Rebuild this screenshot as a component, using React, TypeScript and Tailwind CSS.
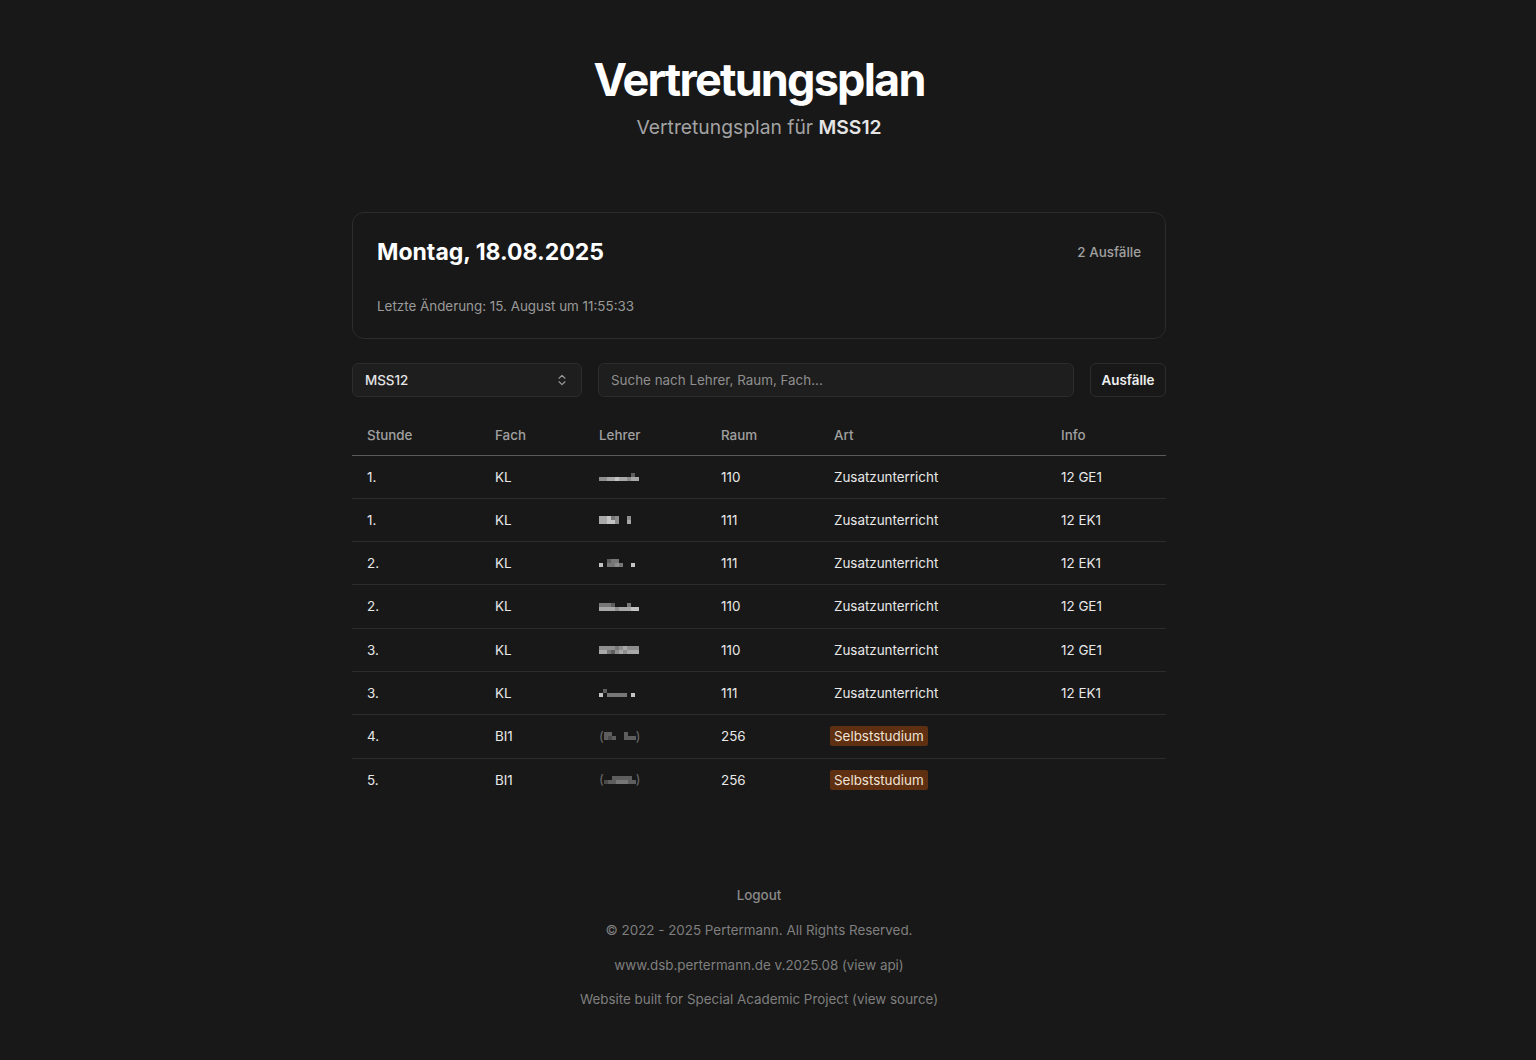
import React from "react";
import { ChevronsUpDown } from "lucide-react";

type Row = {
  stunde: string;
  fach: string;
  lehrer: number[][];
  paren?: boolean;
  raum: string;
  art: string;
  info: string;
  highlight?: boolean;
};

// pixelated names: each row of shades, values 0 = empty
const rows: Row[] = [
  { stunde: "1.", fach: "KL", lehrer: [[0, 0, 0, 0, 0, 0, 0, 0, 3, 0], [5, 5, 6, 6, 7, 6, 6, 5, 6, 6]], raum: "110", art: "Zusatzunterricht", info: "12 GE1" },
  { stunde: "1.", fach: "KL", lehrer: [[6, 6, 7, 4, 5, 0, 0, 5, 0, 0], [6, 6, 7, 7, 5, 0, 0, 6, 0, 0]], raum: "111", art: "Zusatzunterricht", info: "12 EK1" },
  { stunde: "2.", fach: "KL", lehrer: [[0, 0, 3, 4, 4, 0, 0, 0, 0, 0], [7, 0, 4, 4, 5, 4, 0, 0, 7, 0]], raum: "111", art: "Zusatzunterricht", info: "12 EK1" },
  { stunde: "2.", fach: "KL", lehrer: [[4, 4, 4, 3, 0, 0, 0, 4, 0, 0], [6, 6, 6, 6, 5, 6, 6, 6, 7, 7]], raum: "110", art: "Zusatzunterricht", info: "12 GE1" },
  { stunde: "3.", fach: "KL", lehrer: [[5, 5, 5, 5, 4, 5, 6, 5, 5, 5], [6, 6, 4, 3, 5, 6, 5, 6, 6, 6]], raum: "110", art: "Zusatzunterricht", info: "12 GE1" },
  { stunde: "3.", fach: "KL", lehrer: [[0, 3, 0, 0, 0, 0, 0, 0, 0, 0], [7, 0, 4, 4, 4, 4, 4, 0, 7, 0]], raum: "111", art: "Zusatzunterricht", info: "12 EK1" },
  { stunde: "4.", fach: "BI1", lehrer: [[3, 3, 0, 0, 0, 3, 0, 0], [3, 2, 3, 0, 0, 3, 3, 3]], paren: true, raum: "256", art: "Selbststudium", info: "", highlight: true },
  { stunde: "5.", fach: "BI1", lehrer: [[0, 0, 3, 3, 3, 3, 3, 0], [2, 3, 3, 4, 4, 4, 3, 3]], paren: true, raum: "256", art: "Selbststudium", info: "", highlight: true },
];

const shades = ["", "bg-[#3a3a3a]", "bg-[#4a4a4a]", "bg-[#5e5e5e]", "bg-[#777777]", "bg-[#8e8e8e]", "bg-[#a8a8a8]", "bg-[#c4c4c4]"];

function Blur({ grid, paren }: { grid: number[][]; paren?: boolean }) {
  const blocks = (
    <div className="flex flex-col">
      {grid.map((r, i) => (
        <div key={i} className="flex">
          {r.map((v, j) => (
            <div key={j} className={`h-[4px] w-[4px] ${shades[v]}`} />
          ))}
        </div>
      ))}
    </div>
  );
  if (!paren) return blocks;
  return (
    <div className="flex items-center text-[#6a6a6a]">
      <span className="text-[13px]">(</span>
      {blocks}
      <span className="text-[13px]">)</span>
    </div>
  );
}

const App = () => {
  return (
    <main
      className="min-h-[1060px] bg-[#181818] pr-[18px] text-[#e8e8e8]"
      style={{ fontFamily: "Inter, 'Noto Sans', sans-serif" }}
    >
      <div className="mx-auto w-[814px] pt-[52px]">
        <header className="text-center">
          <h1 className="text-[45px] font-bold leading-[56px] tracking-[-0.04em] text-white">
            Vertretungsplan
          </h1>
          <p className="mt-[5px] text-[19.3px] leading-[28px] text-[#a3a3a3]">
            Vertretungsplan für <span className="font-semibold text-[#e5e5e5]">MSS12</span>
          </p>
        </header>

        <section className="mt-[71px] rounded-xl border border-[#2c2c2c] bg-[#181818] px-6 pb-[22px] pt-[24px]">
          <div className="flex items-center justify-between">
            <h2 className="text-[23px] font-bold leading-[30px] text-white">Montag, 18.08.2025</h2>
            <span className="text-[13.4px] font-medium text-[#a0a0a0]">2 Ausfälle</span>
          </div>
          <p className="mt-[29px] text-[13.4px] leading-[20px] text-[#9a9a9a]">
            Letzte Änderung: 15. August um 11:55:33
          </p>
        </section>

        <div className="mt-6 flex items-center gap-4">
          <div className="flex h-[34px] w-[230px] items-center justify-between rounded-md border border-[#2c2c2c] bg-[#1e1e1e] px-3">
            <span className="text-[13.4px] font-medium text-[#e5e5e5]">MSS12</span>
            <ChevronsUpDown size={14} strokeWidth={2} className="text-[#9a9a9a]" />
          </div>
          <div className="flex h-[34px] flex-1 items-center rounded-md border border-[#2c2c2c] bg-[#1e1e1e] px-3">
            <span className="text-[13.4px] text-[#8f8f8f]">Suche nach Lehrer, Raum, Fach...</span>
          </div>
          <button className="h-[34px] w-[76px] rounded-md border border-[#2c2c2c] bg-[#181818] text-[13.4px] font-semibold text-[#ededed]">
            Ausfälle
          </button>
        </div>

        <table className="mt-[19px] w-full border-collapse text-left text-[13.4px]">
          <thead>
            <tr className="border-b border-[#5a5a5a] text-[#a0a0a0]">
              <th className="h-[39px] w-[128px] px-[15px] font-medium">Stunde</th>
              <th className="w-[104px] px-[15px] font-medium">Fach</th>
              <th className="w-[122px] px-[15px] font-medium">Lehrer</th>
              <th className="w-[113px] px-[15px] font-medium">Raum</th>
              <th className="w-[227px] px-[15px] font-medium">Art</th>
              <th className="px-[15px] font-medium">Info</th>
            </tr>
          </thead>
          <tbody>
            {rows.map((r, i) => (
              <tr key={i} className={i < rows.length - 1 ? "border-b border-[#2c2c2c]" : ""}>
                <td className="h-[43.3px] px-[15px]">{r.stunde}</td>
                <td className="px-[15px]">{r.fach}</td>
                <td className="px-[15px]">
                  <Blur grid={r.lehrer} paren={r.paren} />
                </td>
                <td className="px-[15px]">{r.raum}</td>
                <td className="px-[15px]">
                  {r.highlight ? (
                    <span className="-ml-[4px] rounded-[2px] bg-[#5e2f10] px-[4px] py-[2px] text-[#efe3d8]">{r.art}</span>
                  ) : (
                    r.art
                  )}
                </td>
                <td className="px-[15px]">{r.info}</td>
              </tr>
            ))}
          </tbody>
        </table>

        <footer className="mt-[84px] flex flex-col items-center gap-[14.67px] text-[13.4px] leading-[20px] text-[#7f7f7f]">
          <span className="font-medium text-[#8a8a8a]">Logout</span>
          <span>© 2022 - 2025 Pertermann. All Rights Reserved.</span>
          <span>www.dsb.pertermann.de v.2025.08 (view api)</span>
          <span>Website built for Special Academic Project (view source)</span>
        </footer>
      </div>
    </main>
  );
};

export default App;
